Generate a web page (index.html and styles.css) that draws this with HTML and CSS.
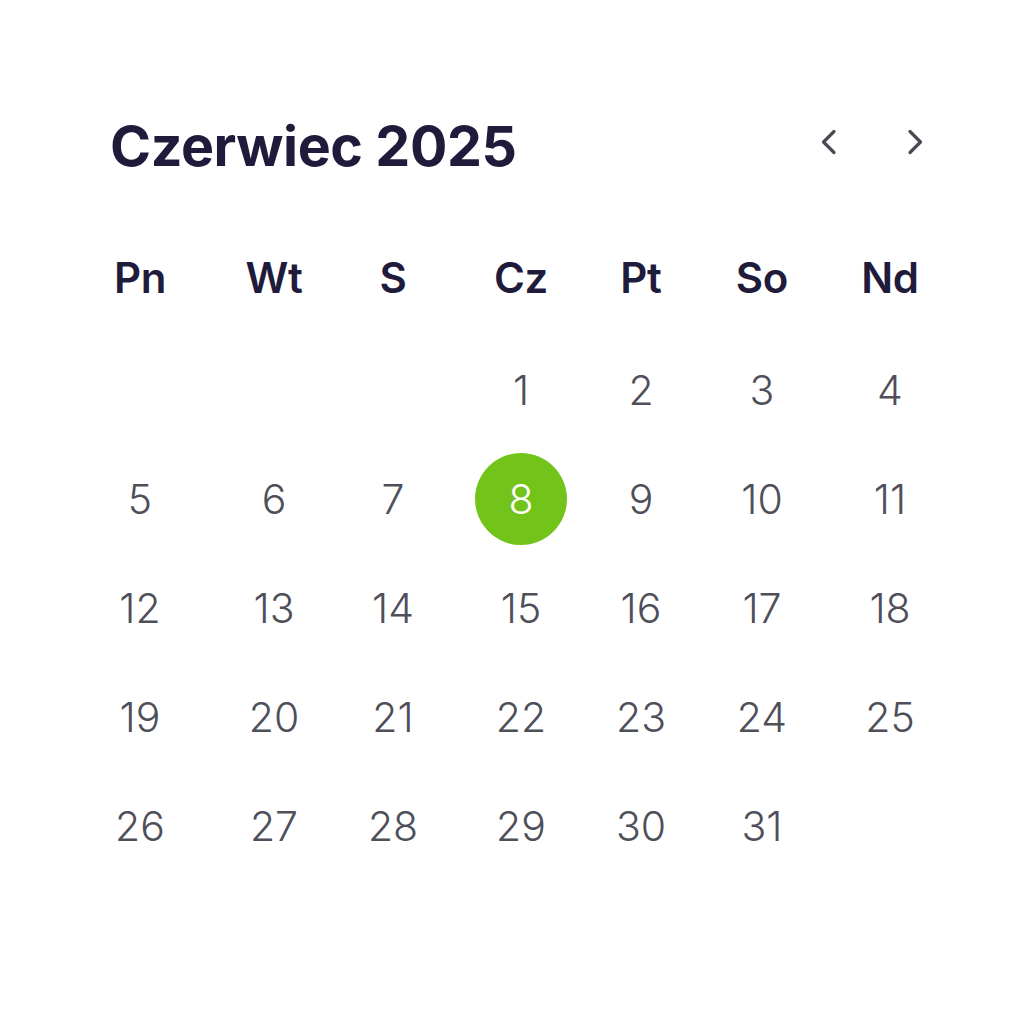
FILE: index.html
```html
<!DOCTYPE html>
<html lang="pl">
<head>
<meta charset="utf-8">
<link rel="stylesheet" href="styles.css">
</head>
<body>
<div class="calendar">
  <div class="header">
    <h1 class="title">Czerwiec 2025</h1>
    <div class="nav">
      <button class="nav-btn" aria-label="Poprzedni miesiąc">
        <svg width="20" height="28" viewBox="0 0 20 28"><path d="M16 3.5 L5.5 14 L16 24.5" fill="none" stroke="#4a4a55" stroke-width="3.2" stroke-linecap="round" stroke-linejoin="round"/></svg>
      </button>
      <button class="nav-btn" aria-label="Następny miesiąc">
        <svg width="20" height="28" viewBox="0 0 20 28"><path d="M4 3.5 L14.5 14 L4 24.5" fill="none" stroke="#4a4a55" stroke-width="3.2" stroke-linecap="round" stroke-linejoin="round"/></svg>
      </button>
    </div>
  </div>
  <div class="weekdays">
    <span>Pn</span><span>Wt</span><span>S</span><span>Cz</span><span>Pt</span><span>So</span><span>Nd</span>
  </div>
  <div class="days">
    <span></span><span></span><span></span>
    <span>1</span><span>2</span><span>3</span><span>4</span>
    <span>5</span><span>6</span><span>7</span><span class="selected"><b>8</b></span><span>9</span><span>10</span><span>11</span>
    <span>12</span><span>13</span><span>14</span><span>15</span><span>16</span><span>17</span><span>18</span>
    <span>19</span><span>20</span><span>21</span><span>22</span><span>23</span><span>24</span><span>25</span>
    <span>26</span><span>27</span><span>28</span><span>29</span><span>30</span><span>31</span><span></span>
  </div>
</div>
</body>
</html>
```

FILE: styles.css
```css
* { box-sizing: border-box; }
html, body { margin: 0; padding: 0; background: #ffffff; }
body { font-family: Inter, "Noto Sans", sans-serif; width: 1024px; height: 1024px; }

.calendar { padding: 118px 0 0 78px; width: 1024px; }

.header {
  display: flex;
  align-items: center;
  justify-content: space-between;
  height: 56px;
  padding-left: 32px;
  padding-right: 98px;
}
.title {
  margin: 0;
  font-size: 55.5px;
  font-weight: 700;
  color: #1f1c3b;
  letter-spacing: -0.4px;
  line-height: 56px;
}
.nav { display: flex; gap: 68px; margin-top: -8px; }
.nav-btn {
  background: none; border: 0; padding: 0; margin: 0;
  width: 20px; height: 28px; display: flex;
}

.weekdays,
.days {
  display: grid;
  grid-template-columns: 124px 144px 94px 162px 78px 164px 92px;
}

.weekdays {
  margin-top: 68px;
  height: 70px;
  align-items: center;
}
.weekdays span {
  text-align: center;
  font-size: 42px;
  font-weight: 600;
  color: #1f1c3b;
  letter-spacing: -0.3px;
}

.days {
  margin-top: 23px;
  grid-auto-rows: 109px;
}
.days span {
  display: flex;
  align-items: center;
  justify-content: center;
  font-size: 41px;
  font-weight: 300;
  color: #4f4f5a;
  white-space: nowrap;
}
.days .selected b {
  flex: none;
  font-weight: 300;
  width: 92px; height: 92px;
  border-radius: 50%;
  background: #72c41a;
  color: #ffffff;
  display: flex; align-items: center; justify-content: center;
}
```
